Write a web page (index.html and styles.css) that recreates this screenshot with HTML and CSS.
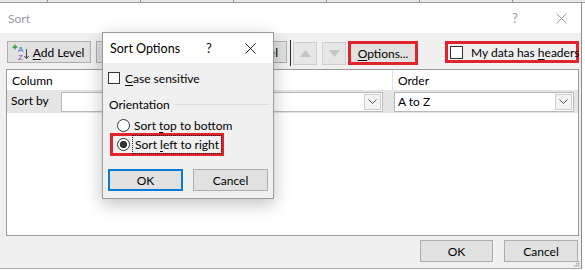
FILE: index.html
```html
<!DOCTYPE html>
<html>
<head>
  <link rel="stylesheet" href="styles.css">
</head>

<body>
  <div class="sheet-strip"></div>

  <div class="dialog">
    <div class="titlebar">
      <span class="title">Sort</span>
      <span class="help">?</span>
      <svg class="close" width="11" height="11" viewBox="0 0 11 11">
        <path d="M0.5 0.5 L10.5 10.5 M10.5 0.5 L0.5 10.5" stroke="#9a9a9a" stroke-width="1" fill="none" />
      </svg>
    </div>

    <div class="dialog-body">
      <div class="toolbar">
        <button class="btn level-btn add-btn">
          <svg class="az-icon" width="18" height="16" viewBox="0 0 18 16">
            <path d="M3 0.5 V5.5 M0.5 3 H5.5" stroke="#3a9a3a" stroke-width="1.4" />
            <text x="6" y="8" font-size="8" font-family="Liberation Sans, sans-serif" fill="#2a6fc9">A</text>
            <text x="6" y="15.5" font-size="8" font-family="Liberation Sans, sans-serif" fill="#8a45b8">Z</text>
            <path d="M14.5 5 V14.5 M12.3 12 L14.5 14.5 L16.7 12" stroke="#444" stroke-width="1" fill="none" />
          </svg>
          <span><u>A</u>dd Level</span>
        </button>
        <!-- delete level sits under the popup, only its edge shows -->
        <button class="btn level-btn del-btn"></button>
        <button class="btn level-btn copy-btn"><span class="copy-label">el</span></button>
        <span class="tool-sep"></span>
        <button class="btn arrow-btn">
          <svg width="11" height="7" viewBox="0 0 11 7"><path d="M0 7 L5.5 0 L11 7 Z" fill="#c4c4c4" /></svg>
        </button>
        <button class="btn arrow-btn">
          <svg width="11" height="7" viewBox="0 0 11 7"><path d="M0 0 L5.5 7 L11 0 Z" fill="#c4c4c4" /></svg>
        </button>
        <span class="mark options-mark">
          <button class="btn options-btn"><span><u>O</u>ptions...</span></button>
        </span>
        <label class="mark headers-mark">
          <span class="checkbox"></span>
          <span>My data has <u>h</u>eaders</span>
        </label>
      </div>

      <div class="levels">
        <div class="levels-head">
          <span class="col col-column">Column</span>
          <span class="col col-sorton"></span>
          <span class="col col-order">Order</span>
        </div>
        <div class="level-row">
          <span class="row-label">Sort by</span>
          <span class="combo combo-column"></span>
          <span class="combo combo-sorton">
            <span class="combo-arrow"><svg width="9" height="5" viewBox="0 0 9 5"><path d="M0.5 0.5 L4.5 4.5 L8.5 0.5" stroke="#555" fill="none" /></svg></span>
          </span>
          <span class="combo combo-order">
            <span class="combo-text">A to Z</span>
            <span class="combo-arrow"><svg width="9" height="5" viewBox="0 0 9 5"><path d="M0.5 0.5 L4.5 4.5 L8.5 0.5" stroke="#555" fill="none" /></svg></span>
          </span>
        </div>
      </div>

      <div class="footer">
        <button class="btn footer-btn ok-main">OK</button>
        <button class="btn footer-btn cancel-main">Cancel</button>
      </div>

      <svg class="grip" width="7" height="7" viewBox="0 0 7 7">
        <rect x="5" y="1" width="1.5" height="1.5" fill="#b0b0b0" />
        <rect x="3" y="3" width="1.5" height="1.5" fill="#b0b0b0" />
        <rect x="5" y="3" width="1.5" height="1.5" fill="#b0b0b0" />
        <rect x="1" y="5" width="1.5" height="1.5" fill="#b0b0b0" />
        <rect x="3" y="5" width="1.5" height="1.5" fill="#b0b0b0" />
        <rect x="5" y="5" width="1.5" height="1.5" fill="#b0b0b0" />
      </svg>
    </div>
  </div>

  <!-- Sort Options popup, floats over the Sort dialog -->
  <div class="popup">
    <div class="popup-title">
      <span class="title">Sort Options</span>
      <span class="help">?</span>
      <svg class="close" width="11" height="11" viewBox="0 0 11 11">
        <path d="M0.5 0.5 L10.5 10.5 M10.5 0.5 L0.5 10.5" stroke="#222" stroke-width="1" fill="none" />
      </svg>
    </div>
    <div class="popup-body">
      <label class="check-row">
        <span class="checkbox"></span>
        <span><u>C</u>ase sensitive</span>
      </label>
      <div class="group-head">
        <span>Orientation</span>
        <span class="group-line"></span>
      </div>
      <label class="radio-row">
        <span class="radio"></span>
        <span class="radio-text">Sort <u>t</u>op to bottom</span>
      </label>
      <div class="mark radio-mark">
        <label class="radio-row">
          <span class="radio checked"></span>
          <span class="radio-text focused">Sort <u>l</u>eft to right</span>
        </label>
      </div>
      <div class="popup-buttons">
        <button class="btn popup-btn default">OK</button>
        <button class="btn popup-btn">Cancel</button>
      </div>
    </div>
  </div>
</body>
</html>
```

FILE: styles.css
```css
* {
  box-sizing: border-box;
}

body {
  position: relative;
  width: 585px;
  height: 270px;
  margin: 0;
  overflow: hidden;
  background: #fff;
  color: #000;
  font-family: Lato, "Segoe UI", sans-serif;
  font-size: 12px;
}

u {
  text-decoration-thickness: 1px;
  text-underline-offset: 2px;
}

.sheet-strip {
  height: 3px;
  background: repeating-linear-gradient(to right, #e6e6e6 0 47px, #8f8f8f 47px 48px, #e6e6e6 48px 93px);
  border-bottom: 1px solid #9c9c9c;
}

.dialog {
  display: flex;
  flex-direction: column;
  width: 582px;
  height: 266px;
  border-right: 1px solid #8c8c8c;
  border-bottom: 1px solid #a8a8a8;
}

.titlebar {
  display: flex;
  align-items: center;
  height: 30px;
  padding: 0 14px 0 8px;
  background: #fff;
  color: #9a9a9a;
}

.titlebar .title {
  flex: 1;
}

.titlebar .help {
  width: 12px;
  margin-right: 35px;
  text-align: center;
  font-size: 13px;
}

.dialog-body {
  position: relative;
  flex: 1;
  padding: 8px 2px 0 6px;
  background: #f0f0f0;
}

.btn {
  display: flex;
  align-items: center;
  justify-content: center;
  padding: 0;
  border: 1px solid #adadad;
  background: #e1e1e1;
  color: #000;
  font: inherit;
}

.toolbar {
  display: flex;
  align-items: flex-start;
  height: 25px;
}

.level-btn {
  height: 22px;
  margin-left: 5px;
  white-space: nowrap;
}

.add-btn {
  width: 84px;
  margin-left: 1px;
  padding-right: 2px;
}

.az-icon {
  margin-right: 3px;
}

.del-btn {
  width: 92px;
}

.copy-btn {
  justify-content: flex-end;
  width: 94px;
  padding-right: 8px;
}

.tool-sep {
  width: 1px;
  height: 26px;
  margin: -1px 0 0 3px;
  background: #2a2a2a;
}

.arrow-btn {
  width: 24px;
  height: 23px;
  margin: 1px 0 0 2px;
  border-color: #cfcfcf;
  background: #e6e6e6;
}

.arrow-btn + .arrow-btn {
  margin-left: 5px;
}

.mark {
  border: 3px solid #e1232b;
}

.options-mark {
  display: flex;
  width: 70px;
  height: 24px;
  margin-left: 2px;
}

.options-btn {
  flex: 1;
  border: none;
}

.headers-mark {
  display: flex;
  align-items: center;
  gap: 8px;
  width: 134px;
  height: 22px;
  margin-left: 27px;
  padding-left: 2px;
  white-space: nowrap;
}

.checkbox {
  flex: none;
  width: 13px;
  height: 13px;
  border: 1px solid #333;
  background: #fff;
}

.levels {
  height: 167px;
  margin-top: 3px;
  border: 1px solid #9a9a9a;
  background: #fff;
}

.levels-head {
  display: flex;
  align-items: center;
  height: 20px;
}

.col {
  height: 100%;
  padding-left: 5px;
  line-height: 21px;
}

.col-column {
  width: 203px;
}

.col-sorton {
  width: 182px;
  border-left: 1px solid #e3e3e3;
}

.col-order {
  flex: 1;
  border-left: 1px solid #e3e3e3;
}

.level-row {
  display: flex;
  align-items: center;
  height: 23px;
  background: #e5e5e5;
}

.row-label {
  width: 54px;
  margin-top: -3px;
  padding-left: 4px;
}

.combo {
  display: flex;
  align-items: center;
  justify-content: flex-end;
  height: 20px;
  border: 1px solid #b9b9b9;
  background: #fff;
}

.combo-column {
  width: 144px;
}

.combo-sorton {
  width: 173px;
  margin-left: 5px;
}

.combo-order {
  width: 180px;
  margin-left: 11px;
}

.combo-text {
  flex: 1;
  padding-left: 3px;
}

.combo-arrow {
  display: flex;
  align-items: center;
  justify-content: center;
  width: 17px;
  height: 16px;
  margin-right: 1px;
  border: 1px solid #cdcdcd;
  background: #f3f3f3;
}

.footer {
  display: flex;
  justify-content: flex-end;
  gap: 11px;
  margin-top: 4px;
  padding-right: 1px;
}

.footer-btn {
  height: 22px;
}

.ok-main {
  width: 73px;
}

.cancel-main {
  width: 74px;
}

.grip {
  position: absolute;
  right: 1px;
  bottom: 1px;
}

.popup {
  position: absolute;
  left: 102px;
  top: 32px;
  display: flex;
  flex-direction: column;
  width: 172px;
  height: 167px;
  border: 1px solid #9a9a9a;
  background: #f0f0f0;
  box-shadow: 0 5px 16px rgba(0, 0, 0, 0.25);
}

.popup-title {
  display: flex;
  align-items: center;
  height: 30px;
  padding: 0 17px 0 7px;
  background: #fff;
}

.popup-title .title {
  flex: 1;
  font-size: 12.5px;
}

.popup-title .help {
  width: 10px;
  margin-right: 31px;
  text-align: center;
  font-size: 13px;
}

.popup-body {
  padding: 9px 4px 0 5px;
}

.check-row {
  display: flex;
  align-items: center;
  gap: 5px;
  height: 12px;
}

.check-row .checkbox {
  width: 12px;
  height: 12px;
}

.group-head {
  display: flex;
  align-items: center;
  height: 14px;
  margin: 13px 0 0 1px;
}

.group-line {
  flex: 1;
  height: 1px;
  margin-left: 5px;
  background: #dcdcdc;
}

.radio-row {
  display: flex;
  align-items: center;
  gap: 4px;
  height: 14px;
}

.group-head + .radio-row {
  margin: 7px 0 0 9px;
}

.radio {
  flex: none;
  width: 13px;
  height: 13px;
  border: 1px solid #333;
  border-radius: 50%;
  background: #fff;
}

.radio.checked {
  background: radial-gradient(circle, #333 0 3.4px, #fff 3.9px);
}

.radio-mark {
  width: 114px;
  height: 23px;
  margin: 1px 0 0 2px;
  padding: 1px 0 0 4px;
}

.focused {
  padding: 0 1px;
  outline: 1px dotted #222;
  outline-offset: 1px;
}

.popup-buttons {
  display: flex;
  gap: 10px;
  margin-top: 13px;
}

.popup-btn {
  width: 75px;
  height: 22px;
}

.popup-btn.default {
  border: 2px solid #0a78d7;
}
```
